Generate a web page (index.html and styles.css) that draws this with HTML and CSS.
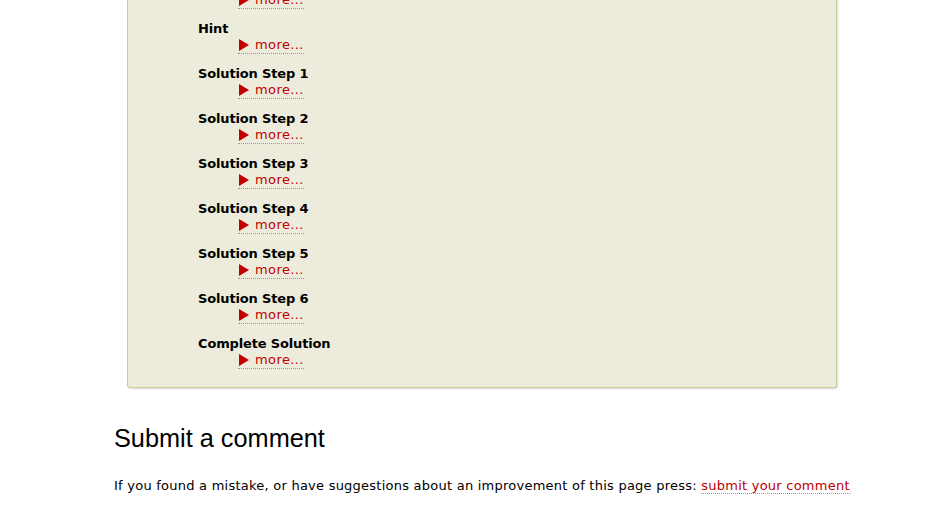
FILE: index.html
```html
<!DOCTYPE html>
<html>
<head>
<meta charset="utf-8">
<link rel="stylesheet" href="styles.css">
</head>
<body>
<div class="page">
  <div class="box">
    <div class="item"><div class="title">Answer</div><a class="more" href="#"><svg class="tri" width="10" height="12" viewBox="0 0 10 12"><path d="M0 0L10 6L0 12Z" fill="#c00000"/></svg>more...</a></div>
    <div class="item"><div class="title">Hint</div><a class="more" href="#"><svg class="tri" width="10" height="12" viewBox="0 0 10 12"><path d="M0 0L10 6L0 12Z" fill="#c00000"/></svg>more...</a></div>
    <div class="item"><div class="title">Solution Step 1</div><a class="more" href="#"><svg class="tri" width="10" height="12" viewBox="0 0 10 12"><path d="M0 0L10 6L0 12Z" fill="#c00000"/></svg>more...</a></div>
    <div class="item"><div class="title">Solution Step 2</div><a class="more" href="#"><svg class="tri" width="10" height="12" viewBox="0 0 10 12"><path d="M0 0L10 6L0 12Z" fill="#c00000"/></svg>more...</a></div>
    <div class="item"><div class="title">Solution Step 3</div><a class="more" href="#"><svg class="tri" width="10" height="12" viewBox="0 0 10 12"><path d="M0 0L10 6L0 12Z" fill="#c00000"/></svg>more...</a></div>
    <div class="item"><div class="title">Solution Step 4</div><a class="more" href="#"><svg class="tri" width="10" height="12" viewBox="0 0 10 12"><path d="M0 0L10 6L0 12Z" fill="#c00000"/></svg>more...</a></div>
    <div class="item"><div class="title">Solution Step 5</div><a class="more" href="#"><svg class="tri" width="10" height="12" viewBox="0 0 10 12"><path d="M0 0L10 6L0 12Z" fill="#c00000"/></svg>more...</a></div>
    <div class="item"><div class="title">Solution Step 6</div><a class="more" href="#"><svg class="tri" width="10" height="12" viewBox="0 0 10 12"><path d="M0 0L10 6L0 12Z" fill="#c00000"/></svg>more...</a></div>
    <div class="item"><div class="title">Complete Solution</div><a class="more" href="#"><svg class="tri" width="10" height="12" viewBox="0 0 10 12"><path d="M0 0L10 6L0 12Z" fill="#c00000"/></svg>more...</a></div>
  </div>
  <h2 class="heading">Submit a comment</h2>
  <p class="note">If you found a mistake, or have suggestions about an improvement of this page press: <a class="link" href="#">submit your comment</a></p>
</div>
</body>
</html>
```

FILE: styles.css
```css
html, body {
  margin: 0;
  padding: 0;
  background: #ffffff;
}
body {
  font-family: "DejaVu Sans", Verdana, sans-serif;
  font-size: 13px;
  color: #000;
}
.page {
  width: 740px;
  margin-left: 114px;
  margin-top: -36px;
}
.box {
  width: 710px;
  margin-left: 13px;
  background: #edecdc;
  border: 1px solid #cccc99;
  border-top: none;
  border-radius: 0 0 3px 3px;
  box-shadow: 1px 1px 2px rgba(0,0,0,0.15);
  padding: 0 0 18px 70px;
  box-sizing: border-box;
}
.item {
  display: flex;
  flex-direction: column;
  align-items: flex-start;
  padding-top: 12px;
}
.title {
  font-weight: bold;
  line-height: 16px;
  letter-spacing: -0.15px;
}
.more {
  margin-left: 40px;
  display: inline-flex;
  align-items: center;
  gap: 6px;
  color: #c00000;
  text-decoration: none;
  border-bottom: 1px dotted #999;
  line-height: 16px;
  letter-spacing: 0.4px;
}
.tri {
  margin-left: 1px;
}
.heading {
  font-family: "Liberation Sans", Arial, sans-serif;
  font-weight: normal;
  font-size: 25.3px;
  margin: 36px 0 0 0;
  line-height: 29px;
}
.note {
  margin: 25px 0 0 0;
  line-height: 16px;
  letter-spacing: 0.24px;
}
.link {
  color: #c00000;
  text-decoration: none;
  border-bottom: 1px dotted #999;
}
```
